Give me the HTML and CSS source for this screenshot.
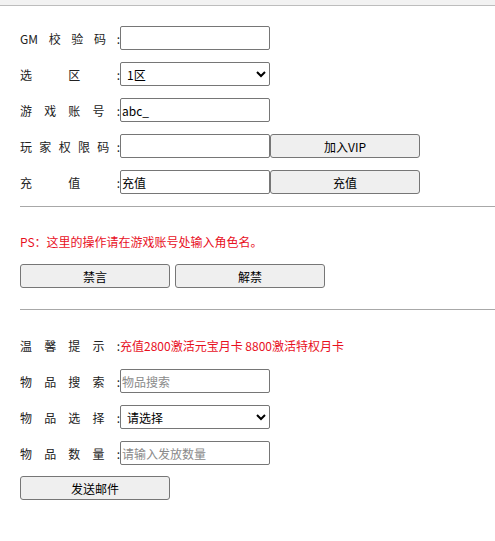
FILE: index.html
```html
<!DOCTYPE html>
<html lang="zh">
<head>
<meta charset="utf-8">
<link rel="stylesheet" href="styles.css">
</head>
<body>
<div class="topbar"></div>
<div class="page">
  <div class="group">
    <div class="row"><span class="lbl">GM校验码:</span><input class="field" type="text"></div>
    <div class="row"><span class="lbl">选区:</span><select class="field sel"><option>1区</option></select></div>
    <div class="row"><span class="lbl">游戏账号:</span><input class="field" type="text" value="abc_"></div>
    <div class="row"><span class="lbl">玩家权限码:</span><input class="field" type="text"><button class="btn">加入VIP</button></div>
    <div class="row"><span class="lbl">充值:</span><input class="field" type="text" value="充值"><button class="btn">充值</button></div>
  </div>
  <hr class="sep sep-a">
  <div class="row note-row"><span class="red">PS：这里的操作请在游戏账号处输入角色名。</span></div>
  <div class="row btn-row"><button class="btn">禁言</button><button class="btn">解禁</button></div>
  <hr class="sep sep-b">
  <div class="row tip-row"><span class="lbl">温馨提示:</span><span class="red">充值2800激活元宝月卡 8800激活特权月卡</span></div>
  <div class="group items">
    <div class="row"><span class="lbl">物品搜索:</span><input class="field" type="text" placeholder="物品搜索"></div>
    <div class="row"><span class="lbl">物品选择:</span><select class="field sel"><option>请选择</option></select></div>
    <div class="row"><span class="lbl">物品数量:</span><input class="field" type="text" placeholder="请输入发放数量"></div>
  </div>
  <div class="row send-row"><button class="btn">发送邮件</button></div>
</div>
</body>
</html>
```

FILE: styles.css
```css
html, body {
  margin: 0;
  padding: 0;
  background: #fff;
}
body {
  font-family: "Noto Sans CJK SC", "Noto Sans", sans-serif;
  font-size: 12px;
  color: #222;
}
.topbar {
  height: 5px;
  background: #f2f2f2;
  border-bottom: 1px solid #bdbdbd;
}
.page {
  padding: 20px 0 0 20px;
}
.group {
  display: flex;
  flex-direction: column;
  gap: 12px;
}
.row {
  display: flex;
  align-items: center;
  height: 24px;
}
.lbl {
  width: 100px;
  text-align: justify;
  text-align-last: justify;
  text-justify: inter-character;
  color: #222;
  white-space: nowrap;
}
.field {
  box-sizing: border-box;
  width: 150px;
  height: 24px;
  margin: 0;
  padding: 1px 1px;
  border: 1px solid #767676;
  border-radius: 2px;
  font-family: "Noto Sans CJK SC", "Noto Sans", sans-serif;
  font-size: 12px;
  color: #000;
  background: #fff;
}
.field::placeholder {
  color: #8a8a8a;
}
.sel {
  padding: 0 2px;
}
.btn {
  box-sizing: border-box;
  width: 150px;
  height: 24px;
  margin: 0;
  padding: 0;
  border: 1px solid #767676;
  border-radius: 3px;
  background: #efefef;
  font-family: "Noto Sans CJK SC", "Noto Sans", sans-serif;
  font-size: 12px;
  color: #000;
}
.sep {
  border: 0;
  border-top: 1px solid #a8a8a8;
  height: 0;
  margin: 0;
}
.sep-a {
  margin-top: 12px;
}
.note-row {
  margin-top: 22px;
}
.red {
  color: #e8101e;
}
.btn-row {
  margin-top: 11px;
  gap: 5px;
}
.sep-b {
  margin-top: 21px;
}
.tip-row {
  margin-top: 23px;
}
.items {
  margin-top: 12px;
}
.send-row {
  margin-top: 11px;
}
```
